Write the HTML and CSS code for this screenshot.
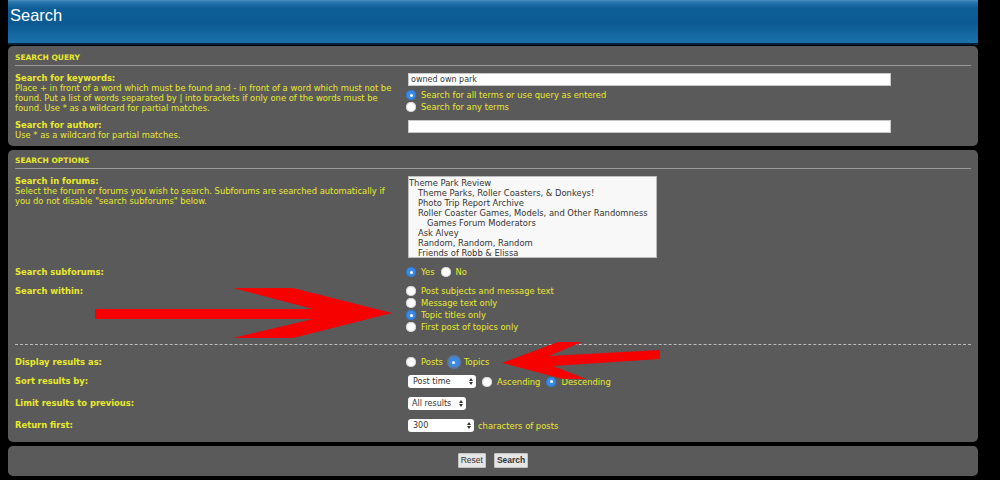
FILE: index.html
```html
<!DOCTYPE html>
<html>
<head>
<meta charset="utf-8">
<title>Search</title>
<link rel="stylesheet" href="styles.css">
</head>
<body>
<div class="page">
  <div class="header"><h1 class="title">Search</h1></div>

  <div class="panel panel-query">
    <h3 class="panel-title">Search query</h3>
    <div class="row">
      <div class="label">
        <b>Search for keywords:</b><br>
        <span class="desc">Place + in front of a word which must be found and - in front of a word which must not be<br>found. Put a list of words separated by | into brackets if only one of the words must be<br>found. Use * as a wildcard for partial matches.</span>
      </div>
      <div class="field">
        <input class="textbox" type="text" value="owned own park">
        <div class="radios">
          <div class="opt"><span class="radio on"></span>Search for all terms or use query as entered</div>
          <div class="opt"><span class="radio"></span>Search for any terms</div>
        </div>
      </div>
    </div>
    <div class="row">
      <div class="label">
        <b>Search for author:</b><br>
        <span class="desc">Use * as a wildcard for partial matches.</span>
      </div>
      <div class="field">
        <input class="textbox" type="text" value="">
      </div>
    </div>
  </div>

  <div class="panel panel-options">
    <h3 class="panel-title">Search options</h3>
    <div class="row">
      <div class="label">
        <b>Search in forums:</b><br>
        <span class="desc">Select the forum or forums you wish to search. Subforums are searched automatically if<br>you do not disable "search subforums" below.</span>
      </div>
      <div class="field">
        <div class="listbox">
          <div class="item">Theme Park Review</div>
          <div class="item l1">Theme Parks, Roller Coasters, &amp; Donkeys!</div>
          <div class="item l1">Photo Trip Report Archive</div>
          <div class="item l1">Roller Coaster Games, Models, and Other Randomness</div>
          <div class="item l2">Games Forum Moderators</div>
          <div class="item l1">Ask Alvey</div>
          <div class="item l1">Random, Random, Random</div>
          <div class="item l1">Friends of Robb &amp; Elissa</div>
        </div>
      </div>
    </div>
    <div class="row row-sub">
      <div class="label lh12"><b>Search subforums:</b></div>
      <div class="field inline">
        <div class="opt"><span class="radio on"></span>Yes</div>
        <div class="opt"><span class="radio"></span>No</div>
      </div>
    </div>
    <div class="row row-within">
      <div class="label lh12"><b>Search within:</b></div>
      <div class="field">
        <div class="opt"><span class="radio"></span>Post subjects and message text</div>
        <div class="opt"><span class="radio"></span>Message text only</div>
        <div class="opt"><span class="radio on"></span>Topic titles only</div>
        <div class="opt"><span class="radio"></span>First post of topics only</div>
      </div>
    </div>
    <div class="sep"></div>
    <div class="row row-display">
      <div class="label lh12"><b>Display results as:</b></div>
      <div class="field inline">
        <div class="opt"><span class="radio"></span>Posts</div>
        <div class="opt"><span class="radio on focus"></span>Topics</div>
      </div>
    </div>
    <div class="row row-sel row-sort">
      <div class="label lh13"><b>Sort results by:</b></div>
      <div class="field inline">
        <div class="select w-sort"><span>Post time</span><svg class="chev" viewBox="0 0 4 7"><path d="M0 3L2 0L4 3ZM0 4L2 7L4 4Z"/></svg></div>
        <div class="opt"><span class="radio"></span>Ascending</div>
        <div class="opt"><span class="radio on"></span>Descending</div>
      </div>
    </div>
    <div class="row row-sel">
      <div class="label lh13"><b>Limit results to previous:</b></div>
      <div class="field inline">
        <div class="select w-limit"><span>All results</span><svg class="chev" viewBox="0 0 4 7"><path d="M0 3L2 0L4 3ZM0 4L2 7L4 4Z"/></svg></div>
      </div>
    </div>
    <div class="row row-sel">
      <div class="label lh13"><b>Return first:</b></div>
      <div class="field inline">
        <div class="select w-return"><span>300</span><svg class="chev" viewBox="0 0 4 7"><path d="M0 3L2 0L4 3ZM0 4L2 7L4 4Z"/></svg></div>
        <span class="after">characters of posts</span>
      </div>
    </div>
  </div>

  <div class="panel panel-buttons">
    <button class="btn" type="button">Reset</button>
    <button class="btn btn-main" type="button">Search</button>
  </div>
</div>

<svg class="annotations" viewBox="0 0 1000 480" width="1000" height="480">
  <polygon points="95,309 313,309 233,288 293,288 392,313 293,338 233,338 313,319 95,319"/>
  <polygon points="502,363 558,342 582,342 549,356 660,350 660,359 553,366 586,379 563,379"/>
</svg>
</body>
</html>
```

FILE: styles.css
```css
html, body {
  margin: 0;
  padding: 0;
}
body {
  background: #000;
  font-family: "DejaVu Sans", Verdana, sans-serif;
  position: relative;
  width: 1000px;
  height: 480px;
  overflow: hidden;
  color: #eaea2c;
}
.page {
  width: 970px;
  margin-left: 8px;
}
.header {
  border-bottom: 2px solid #0a2233;
  margin-bottom: 1px;
  background: linear-gradient(#4a8fc0 0, #2a78b0 2px, #0d5e97 8px, #0b5a93 55%, #1b72ab 100%);
  padding: 3px 0 0 2px;
  height: 40px;
}
.title {
  margin: 0;
  font-family: "Liberation Sans", Arial, sans-serif;
  font-weight: normal;
  font-size: 16.5px;
  line-height: 24px;
  color: #fff;
}
.panel {
  background: #5a5a5a;
  border-radius: 5px;
  padding: 7px 7px 6px;
  margin-bottom: 4px;
}
.panel-options {
  padding-top: 6px;
  padding-bottom: 10px;
}
.panel-title {
  margin: 0;
  font-size: 7.5px;
  font-weight: bold;
  text-transform: uppercase;
  line-height: 10px;
  padding-bottom: 2px;
  border-bottom: 1px solid #9a9a9a;
  color: #eaea2c;
}
.row {
  display: grid;
  grid-template-columns: 391px 1fr;
  margin-top: 7px;
}
.label {
  font-size: 8.4px;
  line-height: 10px;
  white-space: nowrap;
}
.label b {
  font-weight: bold;
}
.desc {
  font-weight: normal;
}
.lh12 { line-height: 12px; }
.lh13 { line-height: 13px; }
.field {
  font-size: 8.4px;
}
.field.inline {
  display: flex;
  align-items: center;
  gap: 6px;
}
.textbox {
  display: block;
  box-sizing: border-box;
  width: 483px;
  height: 13px;
  margin: 0 0 0 2px;
  padding: 0 2px;
  border: 1px solid #c8c8c8;
  background: #fff;
  font-family: "DejaVu Sans", Verdana, sans-serif;
  font-size: 8px;
  color: #333;
  outline: none;
}
.radios {
  margin-top: 3px;
}
.opt {
  display: flex;
  align-items: center;
  gap: 5px;
  height: 12px;
  white-space: nowrap;
}
.radio {
  width: 10px;
  height: 10px;
  border-radius: 50%;
  background: #fbfbfb;
  box-shadow: inset 0 0 0 1px #d0d0d0;
  position: relative;
  flex: none;
}
.radio.on {
  background: #3a8ae8;
  box-shadow: inset 0 0 0 1px #2f78d0;
}
.radio.on::after {
  content: "";
  position: absolute;
  left: 3.5px;
  top: 3.5px;
  width: 3px;
  height: 3px;
  border-radius: 50%;
  background: #fff;
}
.radio.focus {
  box-shadow: 0 0 0 2px rgba(90, 150, 230, 0.55);
}
.listbox {
  margin-left: 2px;
  width: 249px;
  height: 82px;
  box-sizing: border-box;
  background: #f8f8f8;
  border: 1px solid #bdbdbd;
  padding-top: 1px;
  font-size: 8.4px;
  line-height: 10px;
  color: #333;
  white-space: nowrap;
  overflow: hidden;
}
.item { padding-left: 0; }
.item.l1 { padding-left: 9px; }
.item.l2 { padding-left: 18px; }
.row-sub { margin-top: 8px; }
.row-within { margin-top: 7px; }
.sep {
  margin-top: 11px;
  border-top: 1px dashed #bdbdbd;
}
.row-display { margin-top: 11px; }
.row-sel { margin-top: 9px; }
.row-sort { margin-top: 7px; }
.select {
  margin-left: 2px;
  display: flex;
  align-items: center;
  justify-content: space-between;
  box-sizing: border-box;
  height: 13px;
  padding: 0 3px 0 5px;
  background: #fff;
  border-radius: 3px;
  font-size: 8px;
  color: #333;
  white-space: nowrap;
}
.w-sort { width: 68px; }
.w-limit { width: 58px; padding-left: 4px; }
.w-return { width: 66px; }
.chev {
  width: 4px;
  height: 7px;
  fill: #333;
}
.after {
  margin-left: -2px;
}
.panel-buttons {
  padding: 7px 0 8px;
  display: flex;
  justify-content: center;
  gap: 8px;
  margin-bottom: 0;
}
.btn {
  height: 15px;
  padding: 0 2px;
  margin: 0;
  background: #e6e6e6;
  border: 1px solid #c4c4c4;
  border-radius: 1px;
  font-family: "Liberation Sans", Arial, sans-serif;
  font-size: 8.5px;
  line-height: 13px;
  color: #333;
}
.btn-main {
  font-weight: bold;
}
.annotations {
  position: absolute;
  left: 0;
  top: 0;
  pointer-events: none;
  fill: #f60000;
}
```
